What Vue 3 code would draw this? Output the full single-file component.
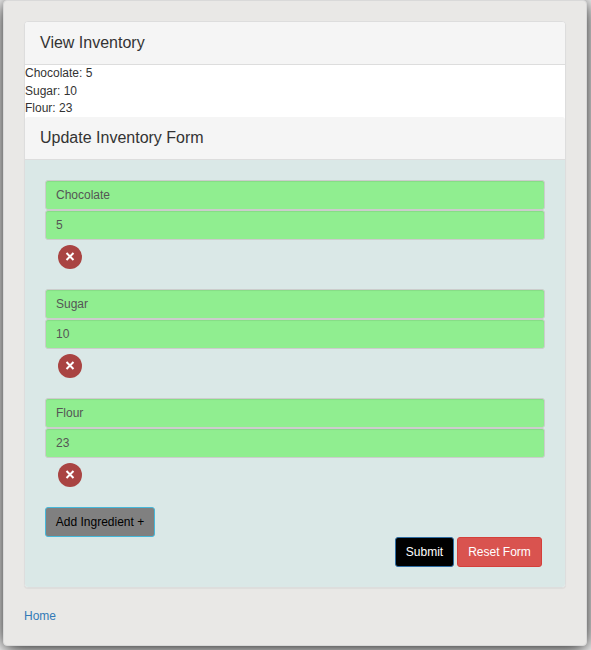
<script setup>
import { ref } from 'vue'

const initial = () => [
  { name: 'Chocolate', amount: 5 },
  { name: 'Sugar', amount: 10 },
  { name: 'Flour', amount: 23 },
]
const inventory = ref(initial())
const items = ref(initial())

const submit = () => {
  inventory.value = items.value.map((item) => ({ ...item }))
}
</script>

<template>
  <main class="page">
    <section class="panel">
      <h3 class="heading">View Inventory</h3>
      <ul class="inventory">
        <li v-for="item in inventory" :key="item.name">{{ item.name }}: {{ item.amount }}</li>
      </ul>
      <h3 class="heading second">Update Inventory Form</h3>
      <form class="form" @submit.prevent="submit">
        <div v-for="(item, index) in items" :key="index" class="ingredient">
          <input v-model="item.name" class="field" type="text" />
          <input v-model="item.amount" class="field" type="text" />
          <button class="remove" type="button" aria-label="Remove" @click="items.splice(index, 1)">
            <svg viewBox="0 0 24 24" width="24" height="24">
              <path d="M8.5 8 L15.5 15 M15.5 8 L8.5 15" />
            </svg>
          </button>
        </div>
        <button class="btn add" type="button" @click="items.push({ name: '', amount: '' })">Add Ingredient +</button>
        <div class="actions">
          <button class="btn submit" type="submit">Submit</button>
          <button class="btn reset" type="button" @click="items = initial()">Reset Form</button>
        </div>
      </form>
    </section>
    <a class="home" href="#">Home</a>
  </main>
</template>

<style>
body {
  background: #fff;
}
#app {
  height: 650px;
  overflow: hidden;
}
</style>

<style scoped>
* {
  box-sizing: border-box;
}
.page {
  width: 584px;
  height: 646px;
  margin: 0 0 0 3px;
  padding: 20px;
  border: 1px solid #d9d9d9;
  border-radius: 4px;
  background: #e9e8e6;
  box-shadow: 0 2px 20px #000;
  font: 12px/17.14px "Liberation Sans", Arial, sans-serif;
  color: #333;
}
.panel {
  width: 542px;
  height: 567px;
  border: 1px solid #ddd;
  border-radius: 4px;
  background: #fff;
  box-shadow: 0 1px 1px rgba(0, 0, 0, 0.05);
}
.heading {
  height: 43px;
  margin: 0;
  padding: 10px 15px;
  border-bottom: 1px solid #ddd;
  border-radius: 3px 3px 0 0;
  background: #f5f5f5;
  font-size: 16px;
  font-weight: 400;
  line-height: 21px;
}
.inventory {
  height: 52px;
  margin: 0;
  padding: 0;
  line-height: 17.5px;
  list-style: none;
}
.form {
  height: 427px;
  padding: 20px;
  border-radius: 0 0 3px 3px;
  background: #dae8e7;
}
.ingredient {
  height: 109px;
}
.field {
  display: block;
  width: 500px;
  height: 30px;
  padding: 5px 10px;
  border: 1px solid #ccc;
  border-radius: 3px;
  background: lightgreen;
  box-shadow: inset 0 1px 1px rgba(0, 0, 0, 0.075);
  color: #555;
  font: inherit;
  line-height: 18px;
}
.remove {
  display: block;
  width: 24px;
  height: 24px;
  margin: 5px 0 0 13px;
  padding: 0;
  border: 0;
  border-radius: 50%;
  background: #a94442;
}
.remove svg {
  display: block;
  fill: none;
  stroke: #fff;
  stroke-width: 2;
}
.btn {
  display: block;
  height: 30px;
  padding: 0;
  border: 1px solid;
  border-radius: 3px;
  color: #fff;
  font: inherit;
  line-height: 18px;
  white-space: nowrap;
}
.add {
  width: 110px;
  border-color: #46b8da;
  background: #808080;
  color: #000;
}
.actions {
  display: flex;
  justify-content: flex-end;
  gap: 3px;
  padding-right: 3px;
}
.submit {
  width: 59px;
  border-color: #2e6da4;
  background: #000;
}
.reset {
  width: 85px;
  border-color: #d43f3a;
  background: #d9534f;
}
.home {
  display: block;
  margin-top: 20px;
  color: #337ab7;
  text-decoration: none;
}
</style>
